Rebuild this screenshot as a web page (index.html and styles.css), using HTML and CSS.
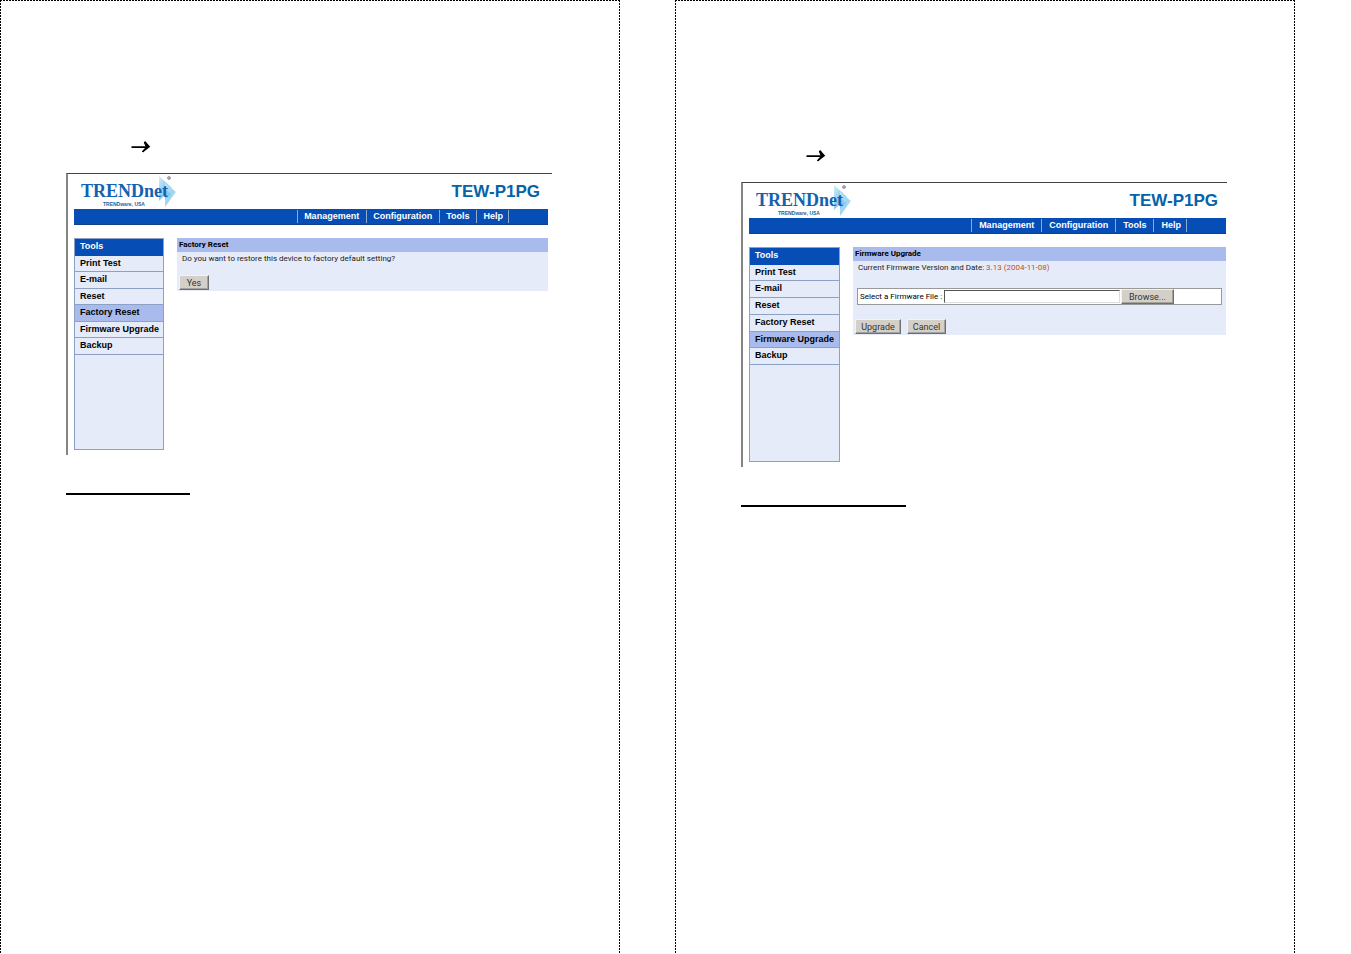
FILE: index.html
```html
<!DOCTYPE html>
<html lang="en">
<head>
<meta charset="utf-8">
<title>TEW-P1PG Tools</title>
<link rel="stylesheet" href="styles.css">
</head>
<body>
<svg class="defs" aria-hidden="true">
  <defs>
    <linearGradient id="fade" x1="0" y1="0" x2="1" y2="1">
      <stop offset="0" stop-color="#d4effb"/>
      <stop offset="0.5" stop-color="#8accee"/>
      <stop offset="1" stop-color="#cdebf9"/>
    </linearGradient>
    <symbol id="logo" viewBox="0 0 104 34">
      <path d="M85 2 L98 14 L85 27Z" fill="url(#fade)"/>
      <path d="M91 9 L102 18 L91 33Z" fill="url(#fade)" opacity="0.85"/>
      <path d="M91 15 L97 20 L91 26Z" fill="#6cbdea" opacity="0.6"/>
      <circle cx="95" cy="4" r="1.5" fill="#aab" stroke="#778" stroke-width="0.6"/>
      <text class="logo-name" x="7" y="23">TRENDnet</text>
      <text class="logo-sub" x="29" y="32">TRENDware, USA</text>
    </symbol>
    <symbol id="arrow" viewBox="0 0 20 12">
      <path d="M0.5 5.2H14.5L12.8 1L14.6 0.6L19.2 5.8L12.2 11.2L11 10.6L14.2 6.9H0.5Z" fill="#000"/>
      <path d="M12.8 1L14.6 0.6L16 3L14.6 5.2ZM14.2 6.9L16 6.8L12.2 11.2L11 10.6Z" fill="#000"/>
    </symbol>
  </defs>
</svg>
<div class="spread">
  <section class="sheet">
    <svg class="arrow"><use href="#arrow"/></svg>
    <div class="screen">
      <header class="brand">
        <svg class="logo" role="img" aria-label="TRENDnet"><use href="#logo"/></svg>
        <h1 class="model">TEW-P1PG</h1>
      </header>
      <nav class="topnav">
        <a href="#">Management</a><a href="#">Configuration</a><a href="#">Tools</a><a href="#">Help</a>
      </nav>
      <div class="columns">
        <aside class="side">
          <div class="menu">
            <h2 class="menu-title">Tools</h2>
            <a href="#">Print Test</a>
            <a href="#">E-mail</a>
            <a href="#">Reset</a>
            <a href="#" class="current">Factory Reset</a>
            <a href="#">Firmware Upgrade</a>
            <a href="#">Backup</a>
          </div>
        </aside>
        <main class="panel">
          <h2 class="panel-title">Factory Reset</h2>
          <form class="panel-body">
            <p class="note">Do you want to restore this device to factory default setting?</p>
            <div class="actions"><button type="button" class="btn yes">Yes</button></div>
          </form>
        </main>
      </div>
    </div>
    <hr class="rule">
  </section>
  <section class="sheet lower">
    <svg class="arrow"><use href="#arrow"/></svg>
    <div class="screen">
      <header class="brand">
        <svg class="logo" role="img" aria-label="TRENDnet"><use href="#logo"/></svg>
        <h1 class="model">TEW-P1PG</h1>
      </header>
      <nav class="topnav">
        <a href="#">Management</a><a href="#">Configuration</a><a href="#">Tools</a><a href="#">Help</a>
      </nav>
      <div class="columns">
        <aside class="side">
          <div class="menu">
            <h2 class="menu-title">Tools</h2>
            <a href="#">Print Test</a>
            <a href="#">E-mail</a>
            <a href="#">Reset</a>
            <a href="#">Factory Reset</a>
            <a href="#" class="current">Firmware Upgrade</a>
            <a href="#">Backup</a>
          </div>
        </aside>
        <main class="panel">
          <h2 class="panel-title">Firmware Upgrade</h2>
          <form class="panel-body">
            <p class="note">Current Firmware Version and Date: <span class="version">3.13 (2004-11-08)</span></p>
            <div class="file-row">
              <label for="firmware">Select a Firmware File :</label>
              <input id="firmware" type="text">
              <button type="button" class="btn browse">Browse...</button>
            </div>
            <div class="actions">
              <button type="button" class="btn upgrade">Upgrade</button>
              <button type="button" class="btn cancel">Cancel</button>
            </div>
          </form>
        </main>
      </div>
    </div>
    <hr class="rule">
  </section>
</div>
</body>
</html>
```
FILE: styles.css
```css
* { box-sizing: border-box; }
body {
  margin: 0;
  background: #fff;
  color: #000;
  font-family: "Liberation Sans", Arial, sans-serif;
  font-size: 9px;
}
h1, h2, p { margin: 0; font-size: inherit; }
a { color: inherit; text-decoration: none; }
.defs { position: absolute; width: 0; height: 0; }

.spread {
  display: grid;
  grid-template-columns: 620fr 620fr;
  column-gap: 55px;
  padding-right: 56px;
  min-height: 100vh;
}
.sheet {
  padding: 141px 68px 0 66px;
  background:
    repeating-linear-gradient(90deg, #000 0 2px, #fff 2px 3px) top / 100% 1px no-repeat,
    repeating-linear-gradient(#000 0 2px, #fff 2px 3px) left / 1px 100% no-repeat,
    repeating-linear-gradient(#000 0 2px, #fff 2px 3px) right / 1px 100% no-repeat;
}
.sheet.lower { padding-top: 150px; }
.arrow {
  display: block;
  width: 20px;
  height: 12px;
  margin: 0 0 20px 65px;
}

.screen {
  border-left: 2px solid #858585;
  border-top: 1px solid #444;
  padding: 0 4px 5px 6px;
}
.lower .screen { padding-right: 1px; }
.brand {
  display: flex;
  justify-content: space-between;
  height: 35px;
}
.logo { width: 104px; height: 34px; }
.logo-name {
  font: bold 18px "Liberation Serif", serif;
  fill: #1262b0;
}
.logo-sub {
  font: bold 5px "Liberation Sans", sans-serif;
  fill: #17659f;
}
.model {
  padding: 8px 8px 0 0;
  font-size: 17px;
  line-height: 20px;
  color: #0563a8;
}
.topnav {
  display: flex;
  justify-content: flex-end;
  height: 16px;
  padding-right: 39px;
  border-bottom: 1px solid #12408a;
  background: #064eb5;
  color: #fff;
  font-weight: bold;
  line-height: 13px;
}
.topnav a {
  height: 13px;
  margin-top: 1px;
  padding: 0 7px 0 6px;
  border-left: 1px solid #8fa9cf;
}
.lower .topnav a { padding-left: 7px; }
.topnav a:last-child { border-right: 1px solid #8fa9cf; padding-right: 5px; }

.columns {
  display: grid;
  grid-template-columns: 90px 1fr;
  column-gap: 13px;
  align-items: start;
  margin-top: 13px;
}
.lower .columns { grid-template-columns: 91px 1fr; }
.side {
  min-height: 212px;
  border: 1px solid #8ba1c5;
  background: #e5ebf9;
}
.lower .side { min-height: 215px; }
.menu {
  display: grid;
  grid-template-rows: repeat(7, 1fr);
  height: 116px;
  font-weight: bold;
  line-height: 15px;
}
.lower .menu { height: 117px; }
.menu > * {
  padding-left: 5px;
  border-bottom: 1px solid #8ba1c5;
  white-space: nowrap;
}
.menu .menu-title { background: #064eb5; color: #fff; border-bottom-color: #064eb5; }
.menu .current { background: #a9bbec; }

.panel { background: #e5ebf9; }
.panel-title {
  padding-left: 2px;
  background: #a9bbec;
  font: bold 8px/14px Roboto, "Liberation Sans", sans-serif;
}
.panel-body {
  padding: 0 3px 1px 2px;
  font: 8px Roboto, "Liberation Sans", sans-serif;
}
.note { padding-left: 3px; line-height: 14px; color: #222; }
.version { color: #c4501c; }
.actions { display: flex; gap: 6px; margin-top: 9px; }
.btn {
  height: 15px;
  padding: 0;
  border: 1px solid;
  border-color: #f4f2ec #6f6f6f #6f6f6f #f4f2ec;
  box-shadow: inset -1px -1px #a5a29b;
  background: #d4d0c8;
  color: #333;
  font: 9px Roboto, "Liberation Sans", sans-serif;
}
.yes { width: 30px; }
.upgrade { width: 46px; }
.cancel { width: 39px; }
.browse { width: 53px; }
.file-row {
  display: flex;
  align-items: center;
  height: 17px;
  margin: 13px 1px 0 2px;
  padding-left: 2px;
  border: 1px solid #999;
  background: #fff;
}
.file-row label { width: 84px; white-space: nowrap; line-height: 15px; }
.file-row input {
  width: 176px;
  height: 13px;
  margin-right: 1px;
  padding: 0 2px;
  border: 1px solid;
  border-color: #555 #ddd #ddd #555;
  font: 8px Roboto, "Liberation Sans", sans-serif;
}
.lower .actions { margin-top: 14px; }

.rule {
  width: 124px;
  height: 2px;
  margin: 38px 0 0;
  border: 0;
  background: #000;
}
.lower .rule { width: 165px; }
```
